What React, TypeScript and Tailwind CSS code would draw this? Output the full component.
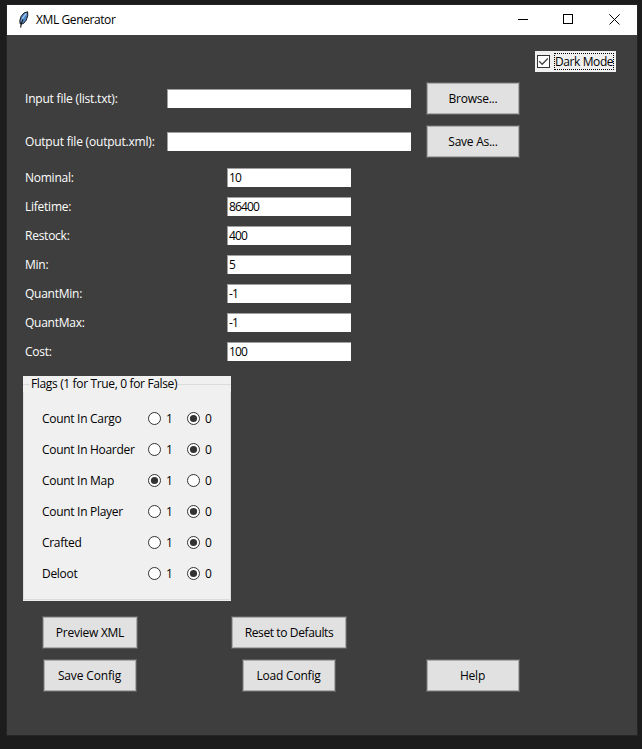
import { useState } from "react";

function FeatherIcon() {
  return (
    <svg width="12" height="18" viewBox="0 0 12 18">
      <path d="M2.2 13 1.8 9.5 3.2 5.2 6 2 9.6.8 9.8 4.5 8.2 9.2 5.4 12.6Z" fill="#4f86c6" stroke="#16181c" strokeWidth="1" />
      <path d="M8.2 2.4 5.2 6.2 3.4 11" fill="none" stroke="#a9cdf2" strokeWidth="1.2" />
      <path d="M5 8.2 3.6 11.5 2.6 16.5" fill="none" stroke="#16181c" strokeWidth="1.2" />
    </svg>
  );
}

function TitleBar() {
  return (
    <header className="flex h-[30px] items-center bg-white pl-[11px] text-black">
      <FeatherIcon />
      <span className="ml-[6px] grow text-[12px] tracking-[-0.4px]">XML Generator</span>
      <svg width="136" height="30" viewBox="0 0 136 30" fill="none" stroke="#000" shapeRendering="crispEdges">
        <path d="M17 14.5h10" />
        <rect x="62.5" y="9.5" width="9" height="9" />
        <path d="m108.3 9.3 10.2 10.2M118.7 9.3l-10.2 10.2" shapeRendering="auto" />
      </svg>
    </header>
  );
}

function Field({ value, className }: { value?: string; className: string }) {
  return (
    <input
      defaultValue={value}
      className={`block h-[19px] border-t border-l border-[#a0a0a0] bg-white pb-[2px] pl-px text-[12px] tracking-[-0.85px] text-black outline-none ${className}`}
    />
  );
}

function Button({ label, className }: { label: string; className: string }) {
  return (
    <button
      className={`h-[33px] shrink-0 border border-[#5c5c5c] bg-[#e1e1e1] whitespace-nowrap text-black shadow-[inset_0_0_0_1px_#adadad] ${className}`}
    >
      {label}
    </button>
  );
}

function Radio({ on, onSelect }: { on: boolean; onSelect: () => void }) {
  return (
    <svg width="13" height="13" viewBox="0 0 13 13" onClick={onSelect}>
      <circle cx="6.5" cy="6.5" r="6" fill="#fff" stroke="#333" />
      {on && <circle cx="6.5" cy="6.5" r="3.6" fill="#333" />}
    </svg>
  );
}

function FlagRow({ name, initial }: { name: string; initial: number }) {
  const [value, setValue] = useState(initial);
  return (
    <div className="flex h-[31px] items-center">
      <span className="w-[106px] tracking-[-0.3px] whitespace-nowrap">{name}</span>
      <Radio on={value === 1} onSelect={() => setValue(1)} />
      <span className="w-[26px] pl-[5px]">1</span>
      <Radio on={value === 0} onSelect={() => setValue(0)} />
      <span className="pl-[5px]">0</span>
    </div>
  );
}

const settings = [
  ["Nominal:", "10"],
  ["Lifetime:", "86400"],
  ["Restock:", "400"],
  ["Min:", "5"],
  ["QuantMin:", "-1"],
  ["QuantMax:", "-1"],
  ["Cost:", "100"],
];

const flags: [string, number][] = [
  ["Count In Cargo", 0],
  ["Count In Hoarder", 0],
  ["Count In Map", 1],
  ["Count In Player", 0],
  ["Crafted", 0],
  ["Deloot", 0],
];

export default function App() {
  return (
    <div className="h-[749px] w-[642px] bg-[#1c1c1c] pt-[5px] pl-[7px] font-['Open_Sans','Noto_Sans',sans-serif] text-[12px] leading-[16px] tracking-[-0.25px]">
      <main className="h-[730px] w-[630px] bg-[#3e3e3e] text-white shadow-[0_0_0_1px_#252525]">
        <TitleBar />
        <div className="flex justify-end pt-4 pr-[21px]">
          <div className="flex h-[21px] w-[81px] items-center bg-[#f0f0f0] pl-[2px] text-black">
            <svg width="13" height="13" viewBox="0 0 13 13">
              <rect x=".5" y=".5" width="12" height="12" fill="#fff" stroke="#333" />
              <path d="m2.2 6.3 3 3 5.6-5.8" fill="none" stroke="#444" strokeWidth="1.3" />
            </svg>
            <span className="ml-[4px] flex h-[17px] w-[60px] items-center border border-dotted border-black tracking-[-0.4px] whitespace-nowrap">
              Dark Mode
            </span>
          </div>
        </div>

        <div className="flex flex-col gap-[10px] pt-[10px] pl-[18px]">
          <div className="flex h-[33px] items-center">
            <span className="w-[142px] tracking-[-0.2px] whitespace-nowrap">Input file (list.txt):</span>
            <Field className="w-[244px]" />
            <Button label="Browse..." className="ml-[15px] w-[94px]" />
          </div>
          <div className="flex h-[33px] items-center">
            <span className="w-[142px] tracking-[-0.2px] whitespace-nowrap">Output file (output.xml):</span>
            <Field className="w-[244px]" />
            <Button label="Save As..." className="ml-[15px] w-[94px]" />
          </div>
        </div>

        <div className="flex flex-col gap-[10px] pt-[10px] pl-[18px]">
          {settings.map(([name, value]) => (
            <div key={name} className="flex h-[19px] items-center">
              <span className="w-[202px]">{name}</span>
              <Field value={value} className="w-[124px]" />
            </div>
          ))}
        </div>

        <section className="mt-[15px] ml-[16px] flex h-[225px] w-[208px] flex-col bg-[#f0f0f0] text-black">
          <div className="flex h-[16px] items-center">
            <span className="mt-[1px] h-px w-[7px] bg-[#dcdcdc]" />
            <span className="px-px tracking-[-0.35px] whitespace-nowrap">Flags (1 for True, 0 for False)</span>
            <span className="mt-[1px] h-px grow bg-[#dcdcdc]" />
          </div>
          <div className="mb-px grow border-x border-b border-[#dcdcdc] pt-[11px] pl-[18px]">
            {flags.map(([name, initial]) => (
              <FlagRow key={name} name={name} initial={initial} />
            ))}
          </div>
        </section>

        <div className="flex flex-col gap-[10px] pt-[15px]">
          <div className="flex pl-[35px]">
            <Button label="Preview XML" className="w-[96px]" />
            <Button label="Reset to Defaults" className="ml-[93px] w-[116px] tracking-[-0.38px]" />
          </div>
          <div className="flex pl-[36px]">
            <Button label="Save Config" className="w-[94px] pr-px tracking-[-0.15px]" />
            <Button label="Load Config" className="ml-[105px] w-[94px] pr-px tracking-[-0.2px]" />
            <Button label="Help" className="ml-[90px] w-[94px] pr-px" />
          </div>
        </div>
      </main>
    </div>
  );
}
